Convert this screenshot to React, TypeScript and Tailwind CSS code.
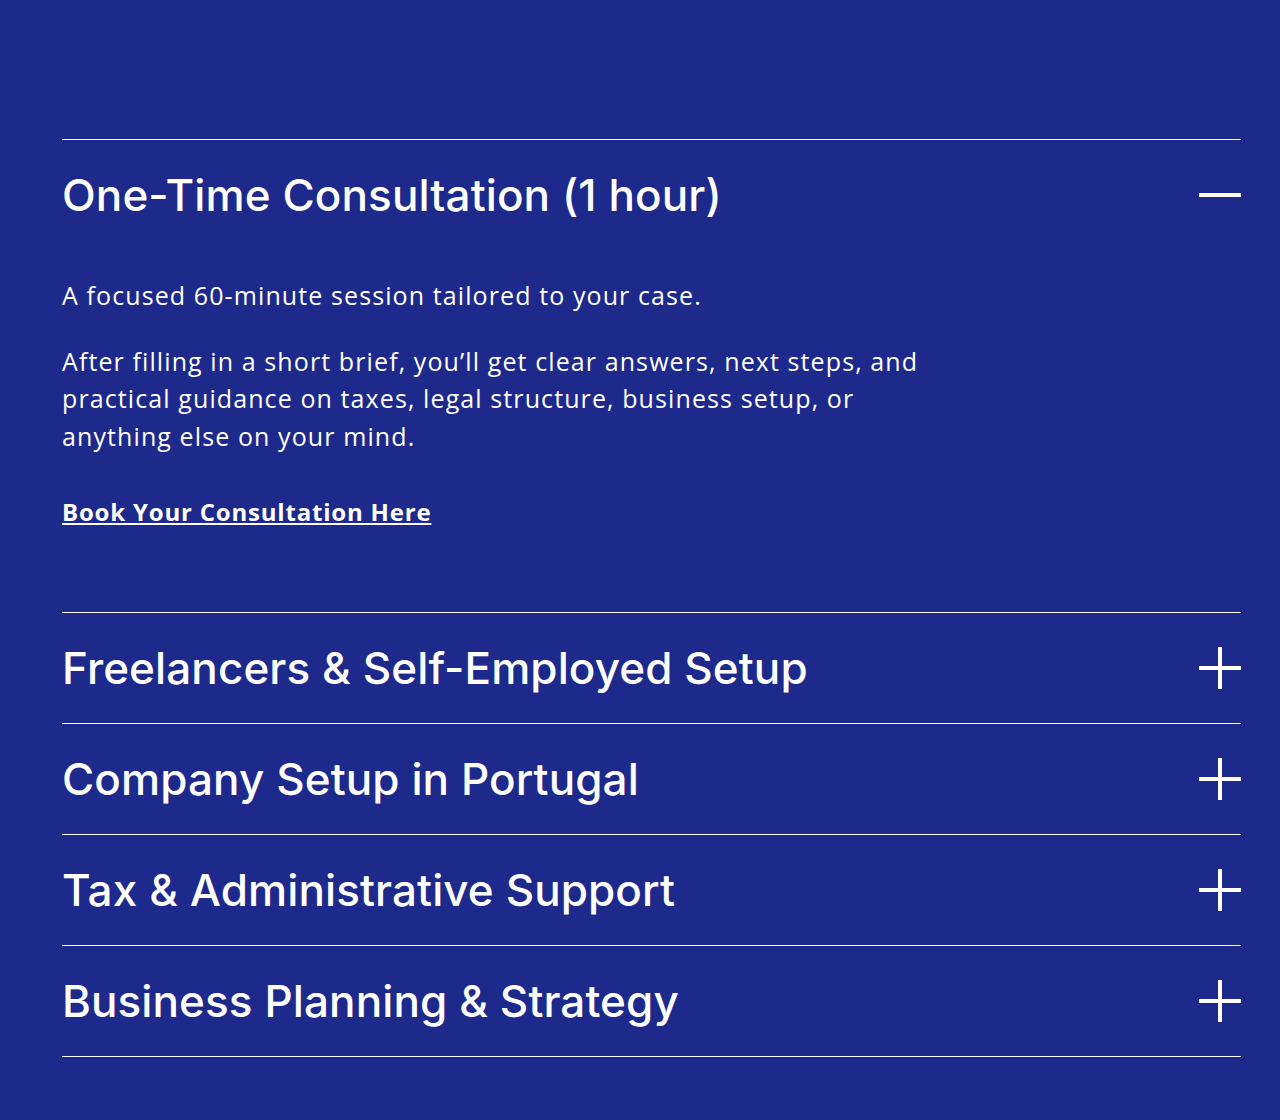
import { useState } from "react";

interface Service {
  title: string;
  body?: string[];
  cta?: string;
}

const services: Service[] = [
  {
    title: "One-Time Consultation (1 hour)",
    body: [
      "A focused 60-minute session tailored to your case.",
      "After filling in a short brief, you’ll get clear answers, next steps, and practical guidance on taxes, legal structure, business setup, or anything else on your mind.",
    ],
    cta: "Book Your Consultation Here",
  },
  { title: "Freelancers & Self-Employed Setup" },
  { title: "Company Setup in Portugal" },
  { title: "Tax & Administrative Support" },
  { title: "Business Planning & Strategy" },
];

function ToggleIcon({ open }: { open: boolean }) {
  return (
    <span className="relative block h-[42px] w-[42px] shrink-0">
      <span className="absolute left-0 top-[19px] h-[4px] w-[42px] bg-white" />
      {!open && (
        <span className="absolute left-[19px] top-0 h-[42px] w-[4px] bg-white" />
      )}
    </span>
  );
}

export default function App() {
  const [openIndex, setOpenIndex] = useState<number | null>(0);

  return (
    <div className="min-h-[1120px] bg-[#1d298b] pt-[139px] pb-[63px] pl-[62px] pr-[39px] text-white">
      <div className="border-t border-white">
        {services.map((s, i) => {
          const open = openIndex === i;
          return (
            <div key={s.title} className="border-b border-white">
              <button
                type="button"
                onClick={() => setOpenIndex(open ? null : i)}
                className="flex h-[110px] w-full items-center justify-between text-left"
              >
                <span className="font-['Inter',sans-serif] text-[44px] font-medium tracking-[0.1px] leading-none">
                  {s.title}
                </span>
                <ToggleIcon open={open} />
              </button>
              {open && s.body && (
                <div className="pt-[27px] pb-[81px] font-['Open_Sans',sans-serif] text-[25px] leading-[37.5px] tracking-[1.1px]">
                  {s.body.map((p) => (
                    <p key={p} className="mb-[28px] max-w-[875px]">
                      {p}
                    </p>
                  ))}
                  {s.cta && (
                    <a
                      href="#"
                      className="mt-[10px] inline-block text-[24px] font-bold tracking-[0.8px] underline"
                    >
                      {s.cta}
                    </a>
                  )}
                </div>
              )}
            </div>
          );
        })}
      </div>
    </div>
  );
}
